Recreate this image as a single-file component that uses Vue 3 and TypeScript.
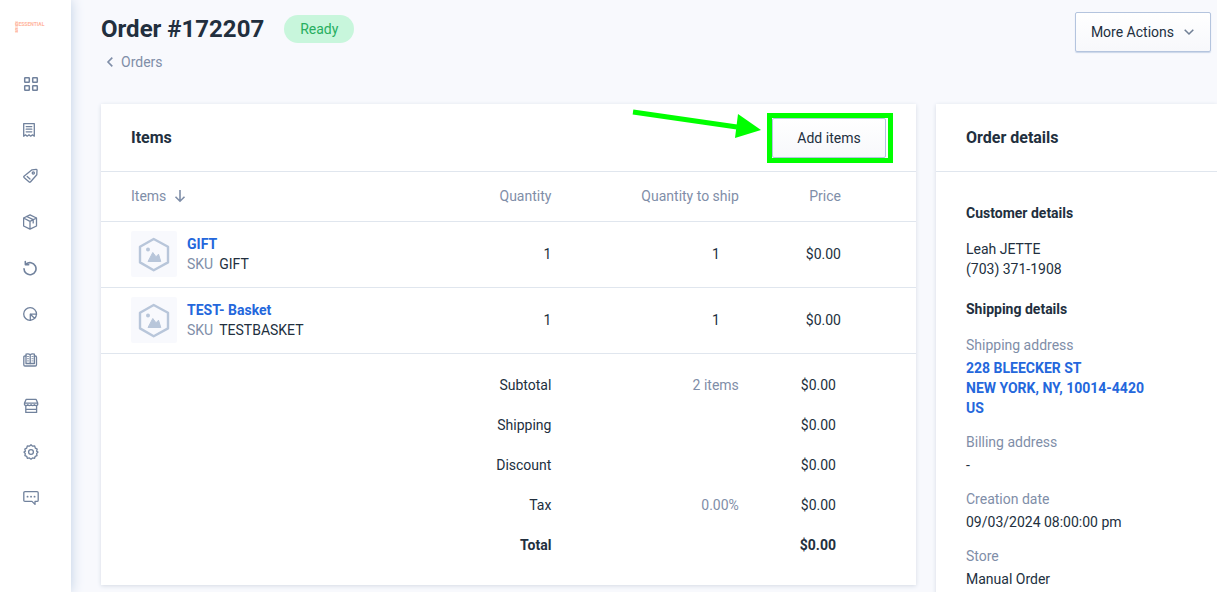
<script setup lang="ts">
interface Item { name: string; sku: string; qty: number; toShip: number; price: string }
interface Total { label: string; note: string; amount: string; strong?: boolean }
interface NavEntry { label: string; icon: string }

const nav: NavEntry[] = [
  { label: 'Dashboard', icon: 'grid' },
  { label: 'Orders', icon: 'receipt' },
  { label: 'Products', icon: 'tag' },
  { label: 'Shipments', icon: 'box' },
  { label: 'Returns', icon: 'return' },
  { label: 'Reports', icon: 'chart' },
  { label: 'Catalog', icon: 'book' },
  { label: 'Stores', icon: 'store' },
  { label: 'Settings', icon: 'gear' },
  { label: 'Messages', icon: 'chat' },
]

const items: Item[] = [
  { name: 'GIFT', sku: 'GIFT', qty: 1, toShip: 1, price: '$0.00' },
  { name: 'TEST- Basket', sku: 'TESTBASKET', qty: 1, toShip: 1, price: '$0.00' },
]

const totals: Total[] = [
  { label: 'Subtotal', note: '2 items', amount: '$0.00' },
  { label: 'Shipping', note: '', amount: '$0.00' },
  { label: 'Discount', note: '', amount: '$0.00' },
  { label: 'Tax', note: '0.00%', amount: '$0.00' },
  { label: 'Total', note: '', amount: '$0.00', strong: true },
]
</script>

<template>
  <div class="app">
    <aside class="sidebar">
      <div class="logo"><span>G</span>ESSENTIAL<br><span>S</span></div>
      <nav aria-label="Main">
        <a v-for="entry in nav" :key="entry.icon" href="#" :aria-label="entry.label">
          <svg viewBox="0 0 16 16" width="16" height="16" fill="none" stroke="currentColor" stroke-width="1.3" stroke-linejoin="round" stroke-linecap="round">
            <g v-if="entry.icon === 'grid'" stroke-width="1.5">
              <rect x="1.7" y="1.7" width="4.6" height="4.6" rx="0.6" />
              <rect x="9.7" y="1.7" width="4.6" height="4.6" rx="0.6" />
              <rect x="1.7" y="9.7" width="4.6" height="4.6" rx="0.6" />
              <rect x="9.7" y="9.7" width="4.6" height="4.6" rx="0.6" />
            </g>
            <g v-else-if="entry.icon === 'receipt'">
              <path d="M.7 1.6h10.6v12.6l-1.8-1.4-1.8 1.4L6 12.8l-1.8 1.4-1.7-1.4-1.8 1.4z" />
              <path d="M3.2 4.6h5.6M3.2 7.2h5.6M3.2 9.8h5.6" />
            </g>
            <g v-else-if="entry.icon === 'tag'">
              <path d="M9 1.8 13.2 1.3q.7 0 .8.7L13.8 6.8 7.4 14q-.6.5-1.2 0L1 9.4q-.5-.6 0-1.2z" />
              <circle cx="10.3" cy="5" r="1.1" />
              <path d="m4.2 8.5 2.8 2.6" />
            </g>
            <g v-else-if="entry.icon === 'box'">
              <path d="M7 .8 13.5 4v8L7 15.2.6 12V4zM.6 4 7 7.3 13.5 4M7 7.3v7.9M3.7 2.5l6.5 3.2v3.2" />
            </g>
            <g v-else-if="entry.icon === 'return'" stroke-width="1.6">
              <path d="M3 4.2A6 6 0 1 1 1 8.7M5.7 4.7 2.4 4.6 2.3 1.5" />
            </g>
            <g v-else-if="entry.icon === 'chart'">
              <path d="M7.2 14.4A6.4 6.4 0 1 1 13.5 8.2" />
              <path d="M7.3 8.2h6.2q-.4 5-6.2 6.2zM7.3 8.2l4.5 4.2" />
            </g>
            <g v-else-if="entry.icon === 'book'">
              <path d="M3 2.2q2.7-.8 4.2.6 1.5-1.4 4.2-.6v9.3H3zM7.2 2.8v9" />
              <path d="M3 4H2Q.8 4 .8 5.2v7.6Q.8 14 2 14h10.3q1.2 0 1.2-1.2V5.2q0-1.2-1.2-1.2h-.9" />
              <path d="M4.4 4.5h1.3M4.4 6.7h1.3M4.4 8.9h1.3M8.9 4.5h1.2M8.9 6.7h1.2M8.9 8.9h1.2" stroke-width=".8" />
            </g>
            <g v-else-if="entry.icon === 'store'">
              <path d="M3.2 1.3h9.8l1.7 3.8v1.6q-1.6 1.8-3.3 0-1.7 1.8-3.3 0-1.7 1.8-3.3 0-1.7 1.8-3.3 0V5.1zM1.6 5.1h13" />
              <path d="M2.8 7.8v6.6h10.8V7.8M3 11.4h10.4" />
            </g>
            <g v-else-if="entry.icon === 'gear'">
              <path d="M6.4 2.2 8 .8l1.6 1.4 2.1-.2.6 2.1 1.9 1-.6 2L15 8l-1.4 1.6.4 2-1.8.7-.6 2-2.1-.4L8 15.2l-1.6-1.3-2.1.4-.6-2-1.8-.7.4-2L1 8l1.400-.9-.6-2 1.900-1 .6-2.100z" />
              <circle cx="8" cy="8" r="2.4" />
            </g>
            <g v-else>
              <path d="M2 1.6h12q1.200 0 1.200 1.200v7.400q0 1.200-1.200 1.200h-2v3l-3-3H2q-1.200 0-1.200-1.200V2.800q0-1.200 1.200-1.200z" />
              <path d="M4.500 6.700h.1M8 6.700h.1M11.500 6.700h.1" stroke-width="1.800" />
            </g>
          </svg>
        </a>
      </nav>
    </aside>

    <main class="main">
      <header class="page-head">
        <div>
          <div class="title-row">
            <h1>Order #172207</h1>
            <span class="badge">Ready</span>
          </div>
          <a class="back" href="#">
            <svg viewBox="0 0 8 12" width="8" height="12"><path d="M6.300 1.600 2 6l4.300 4.400" fill="none" stroke="currentColor" stroke-width="1.600" /></svg>
            Orders
          </a>
        </div>
        <button class="btn more" type="button">
          More Actions
          <svg viewBox="0 0 12 8" width="12" height="8"><path d="m1.700 1.800 4.300 4.200 4.300-4.200" fill="none" stroke="#718096" stroke-width="1.600" /></svg>
        </button>
      </header>

      <div class="columns">
        <section class="card items">
          <header class="card-head">
            <h2>Items</h2>
            <div class="highlight">
              <button class="btn add" type="button">Add items</button>
              <svg class="arrow" viewBox="0 0 132 34" width="132" height="34" aria-hidden="true">
                <path d="M3 6 107 21" stroke="#00ff00" stroke-width="5" />
                <path d="m108 8 23 16-26 8z" fill="#00ff00" />
              </svg>
            </div>
          </header>
          <table>
            <colgroup><col class="c-item"><col class="c-qty"><col class="c-ship"><col></colgroup>
            <thead>
              <tr>
                <th scope="col">
                  <span class="sort">Items
                    <svg viewBox="0 0 12 14" width="12" height="14"><path d="M6 1v11M1.500 7.800 6 12.200l4.500-4.400" fill="none" stroke="currentColor" stroke-width="1.600" /></svg>
                  </span>
                </th>
                <th scope="col">Quantity</th>
                <th scope="col">Quantity to ship</th>
                <th scope="col">Price</th>
              </tr>
            </thead>
            <tbody>
              <tr v-for="item in items" :key="item.sku">
                <td>
                  <div class="product">
                    <span class="thumb">
                      <svg viewBox="0 0 46 46" width="46" height="46">
                        <path d="M22.700 8 37 15.800v15.600l-14.300 7.800L9 31.400V15.800z" fill="none" stroke="#b8c6da" stroke-width="2.400" stroke-linejoin="round" />
                        <circle cx="17" cy="18.500" r="2" fill="#b8c6da" />
                        <path d="m17 30.500 4.800-9 3.200 4.300 2.500-2.600 2.300 7.300z" fill="#b8c6da" stroke="#b8c6da" stroke-linejoin="round" />
                      </svg>
                    </span>
                    <div>
                      <a href="#">{{ item.name }}</a>
                      <p><span class="muted">SKU</span>{{ item.sku }}</p>
                    </div>
                  </div>
                </td>
                <td>{{ item.qty }}</td>
                <td class="ship">{{ item.toShip }}</td>
                <td>{{ item.price }}</td>
              </tr>
            </tbody>
            <tfoot>
              <tr v-for="row in totals" :key="row.label" :class="{ strong: row.strong }">
                <th scope="row" colspan="2">{{ row.label }}</th>
                <td class="muted">{{ row.note }}</td>
                <td>{{ row.amount }}</td>
              </tr>
            </tfoot>
          </table>
        </section>

        <section class="card details">
          <header class="card-head"><h2>Order details</h2></header>
          <div class="details-body">
            <h3>Customer details</h3>
            <p>Leah JETTE<br>(703) 371-1908</p>
            <h3>Shipping details</h3>
            <dl>
              <dt>Shipping address</dt>
              <dd><a href="#">228 BLEECKER ST<br>NEW YORK, NY, 10014-4420<br>US</a></dd>
              <dt>Billing address</dt>
              <dd>-</dd>
              <dt>Creation date</dt>
              <dd>09/03/2024 08:00:00 pm</dd>
              <dt>Store</dt>
              <dd>Manual Order</dd>
            </dl>
          </div>
        </section>
      </div>
    </main>
  </div>
</template>

<style>
body { background: #f8f9fd; }
</style>

<style scoped>
* { box-sizing: border-box; margin: 0; }
.app {
  display: flex;
  height: 100vh;
  overflow: hidden;
  font: 14px/20px Roboto, "Liberation Sans", sans-serif;
  color: #222f3e;
}
a { color: #2467dc; font-weight: 700; text-decoration: none; }
.sidebar {
  flex: none;
  width: 71px;
  background: #fff;
  box-shadow: 0 0 12px #becfe4;
}
.logo {
  height: 61px;
  padding: 21px 0 0 15px;
  font-size: 5px;
  line-height: 6px;
  font-weight: 700;
  color: #ffb49d;
}
.logo span { background: #ffe3db; }
nav a {
  display: flex;
  height: 46px;
  align-items: center;
  padding-left: 23px;
  color: #71829d;
}
.main { flex: 1; min-width: 0; padding-left: 30px; }
.page-head {
  display: flex;
  height: 104px;
  justify-content: space-between;
  align-items: flex-start;
  padding: 12px 6px 0 0;
}
.title-row { display: flex; align-items: center; gap: 20px; height: 32px; margin-top: 1px; }
h1 { font-size: 24px; line-height: 32px; font-weight: 700; }
.badge {
  padding: 4px 16px;
  border-radius: 14px;
  background: #c8f6dc;
  color: #27ae60;
}
.back {
  display: inline-flex;
  align-items: center;
  gap: 7px;
  margin: 7px 0 0 5px;
  color: #7f8ea8;
  font-weight: 400;
}
.btn {
  height: 40px;
  border: 1px solid #b4c4de;
  border-radius: 2px;
  background: linear-gradient(#fff, #f7f8fb);
  font: inherit;
  color: inherit;
  white-space: nowrap;
}
.more { display: flex; align-items: center; gap: 9px; padding: 0 15px; box-shadow: 0 1px 1px #c9d5e8; }
.columns {
  display: grid;
  grid-template-columns: minmax(0, 815fr) minmax(0, 281fr);
  gap: 20px;
  align-items: start;
}
.card { background: #fff; box-shadow: 0 1px 4px #d5dbe5; }
.card-head {
  display: flex;
  height: 68px;
  align-items: center;
  justify-content: space-between;
  padding: 0 23px 0 30px;
  border-bottom: 1px solid #e0e6ee;
}
h2 { font-size: 16px; line-height: 20px; font-weight: 700; }
.highlight { position: relative; padding-right: 2px; border: 5px solid #00ff00; }
.add { display: block; width: 114px; }
.arrow { position: absolute; right: 126px; top: -12px; }
table { width: 100%; table-layout: fixed; border-collapse: collapse; }
.c-item { width: 37%; }
.c-qty { width: 19%; }
.c-ship { width: 23%; }
th, td { padding: 0 6px 0 0; text-align: right; font-weight: 400; }
thead th { height: 49px; color: #7f8ea8; }
th:first-child, td:first-child { text-align: left; }
thead th:first-child, tbody td:first-child { padding-left: 30px; }
th:last-child, td:last-child { padding-right: 75px; }
thead tr, tbody tr { border-bottom: 1px solid #e0e6ee; }
tbody td { height: 66px; }
tbody .ship { padding-right: 25px; }
.sort { display: inline-flex; align-items: center; gap: 8px; }
.product { display: flex; align-items: center; gap: 10px; }
.thumb { flex: none; width: 46px; height: 46px; border-radius: 2px; background: #f8f9fd; }
.thumb svg { display: block; }
.muted { color: #7f8ea8; }
.product .muted { margin-right: 6px; }
tfoot th:first-child { text-align: right; }
tfoot td:last-child { padding-right: 80px; }
tfoot tr { height: 40px; }
tfoot::before { content: ""; display: table-row; height: 12px; }
.strong th, .strong td { font-weight: 700; }
.items { padding-bottom: 20px; }
.details { min-height: 488px; }
.details-body { padding: 31px 0 0 30px; }
h3 { margin-bottom: 16px; font-size: 14px; line-height: 20px; font-weight: 700; }
.details-body p { margin-bottom: 20px; }
dt { margin-bottom: 3px; color: #7f8ea8; }
dd { margin-bottom: 14px; }
</style>
